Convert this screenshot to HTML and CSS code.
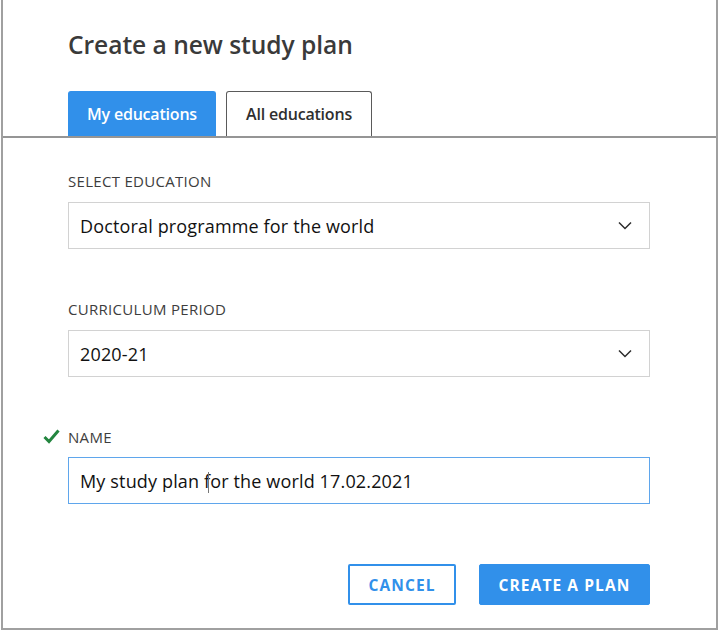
FILE: index.html
```html
<!DOCTYPE html>
<html lang="en">
<head>
<meta charset="utf-8">
<title>Create a new study plan</title>
<link rel="stylesheet" href="styles.css">
</head>
<body>
<div class="dialog">
  <div class="head">
    <h1 class="title">Create a new study plan</h1>
    <div class="tabs">
      <button class="tab tab-active">My educations</button>
      <button class="tab tab-all">All educations</button>
    </div>
  </div>
  <div class="body">
    <div class="field">
      <div class="label">SELECT EDUCATION</div>
      <div class="select">
        <span class="value">Doctoral programme for the world</span>
        <svg class="chev" width="14" height="9" viewBox="0 0 14 9"><path d="M1 1.5 L7 7.5 L13 1.5" fill="none" stroke="#2b2b2b" stroke-width="1.5"/></svg>
      </div>
    </div>
    <div class="field field-2">
      <div class="label">CURRICULUM PERIOD</div>
      <div class="select">
        <span class="value">2020-21</span>
        <svg class="chev" width="14" height="9" viewBox="0 0 14 9"><path d="M1 1.5 L7 7.5 L13 1.5" fill="none" stroke="#2b2b2b" stroke-width="1.5"/></svg>
      </div>
    </div>
    <div class="field field-3">
      <div class="label label-ok">
        <svg class="check" width="17" height="15" viewBox="0 0 17 15"><path d="M1.5 8 L6 12.5 L15.5 1.5" fill="none" stroke="#23853f" stroke-width="3"/></svg>
        <span>NAME</span>
      </div>
      <div class="input"><span class="value">My study plan f<span class="caret"></span>or the world 17.02.2021</span></div>
    </div>
    <div class="actions">
      <button class="btn btn-outline">CANCEL</button>
      <button class="btn btn-primary">CREATE A PLAN</button>
    </div>
  </div>
</div>
</body>
</html>
```
FILE: styles.css
```css
html, body {
  margin: 0;
  padding: 0;
  background: #ffffff;
}
body {
  font-family: "Open Sans", "Noto Sans", sans-serif;
  color: #1a1a1a;
}
.dialog {
  box-sizing: border-box;
  width: 717px;
  height: 630px;
  margin-left: 1px;
  border: 2px solid #a0a0a0;
  border-top: none;
  display: flex;
  flex-direction: column;
}
.head {
  padding: 29px 65px 0 65px;
  border-bottom: 2px solid #959595;
}
.title {
  margin: 0;
  font-size: 24.6px;
  line-height: 32px;
  font-weight: 600;
  color: #3a3a3a;
  letter-spacing: -0.05px;
}
.tabs {
  display: flex;
  gap: 10px;
  margin-top: 30px;
}
.tab {
  box-sizing: border-box;
  height: 45px;
  font-family: inherit;
  font-size: 16px;
  font-weight: 600;
  letter-spacing: -0.2px;
  color: #2f2f2f;
  background: #fff;
  border: 1px solid #5a5a5a;
  border-bottom: none;
  border-radius: 3px 3px 0 0;
  padding: 0;
  cursor: pointer;
}
.tab-active {
  width: 148px;
  background: #3190ea;
  border-color: #3190ea;
  color: #ffffff;
}
.tab-all {
  width: 146px;
}
.body {
  padding: 33px 66px 0 65px;
  flex: 1;
  display: flex;
  flex-direction: column;
}
.field-2 {
  margin-top: 50px;
}
.field-3 {
  margin-top: 50px;
}
.label {
  font-size: 15px;
  line-height: 20px;
  color: #3d3d3d;
  letter-spacing: 0.3px;
  margin-bottom: 11px;
}
.label-ok {
  display: flex;
  align-items: center;
  gap: 8px;
  margin-left: -25px;
  margin-bottom: 10px;
}
.check {
  display: block;
  margin-top: -2px;
}
.select, .input {
  box-sizing: border-box;
  height: 47px;
  border: 1px solid #d2d2d2;
  display: flex;
  align-items: center;
  padding: 0 17px 0 11px;
  font-size: 18px;
  color: #111;
  letter-spacing: 0.15px;
}
.select .value, .input .value {
  flex: 1;
}
.input {
  border-color: #5fa6ec;
}
.caret {
  display: inline-block;
  width: 1px;
  height: 21px;
  background: #777;
  vertical-align: -5px;
  margin-left: -2px;
  margin-right: 1px;
}
.chev {
  display: block;
}
.actions {
  display: flex;
  justify-content: flex-end;
  gap: 23px;
  margin-top: 60px;
}
.btn {
  box-sizing: border-box;
  height: 41px;
  font-family: inherit;
  font-size: 15.5px;
  font-weight: 700;
  letter-spacing: 1.1px;
  border-radius: 2px;
  cursor: pointer;
}
.btn-outline {
  width: 108px;
  background: #fff;
  color: #3190ea;
  border: 2px solid #3190ea;
}
.btn-primary {
  width: 171px;
  background: #3190ea;
  color: #fff;
  border: 1px solid #3190ea;
}
```
